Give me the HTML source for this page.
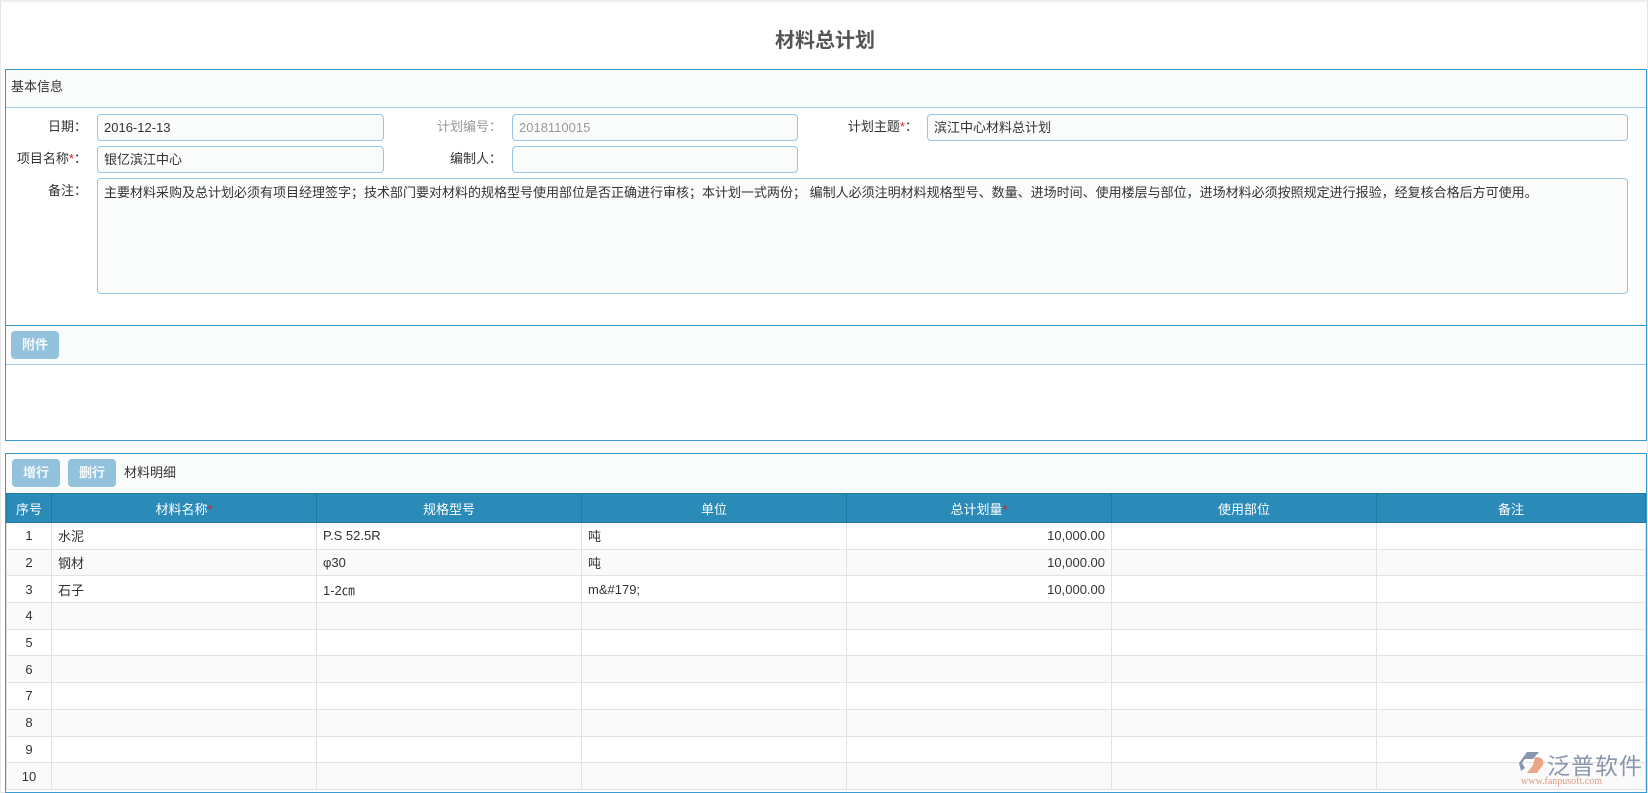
<!DOCTYPE html>
<html><head><meta charset="utf-8"><style>
*{box-sizing:border-box;margin:0;padding:0}
body{width:1648px;height:793px;background:#fff;font-family:"Liberation Sans","Noto Sans CJK SC",sans-serif;font-size:13px;color:#333;position:relative;overflow:hidden;border:1px solid #e6e6e6;border-top:2px solid #eee}
.abs{position:absolute}
.title{left:0;width:1648px;top:22px;text-align:center;font-size:20px;font-weight:bold;color:#555}
.panel{border:1px solid #3a9ad0;background:#fff}
.hd{background:#fafcfc;border-bottom:1px solid #a3c9e3}
.lbl{text-align:right;line-height:26px;height:26px}
.inp{border:1px solid #9cc3e3;border-radius:4px;background:#fafcfc;padding:0 6px;line-height:25px}
.btn{background:#93c3dc;border-radius:4px;font-weight:bold;text-align:center;color:#f4f8fb}
.red{color:#e02020}
table{border-collapse:collapse;table-layout:fixed;position:absolute}
td,th{border:1px solid #e2e2e2;height:26.7px;padding:0 6px;white-space:nowrap}
th{background:#2a8ab8;color:#fff;font-weight:normal;border-color:#2278a3;height:29px}
tr:nth-child(odd) td{background:#fafafa}
</style></head><body>
<div class="abs title">材料总计划</div>

<div class="abs panel" style="left:4px;top:67px;width:1642px;height:372px"></div>
<div class="abs hd" style="left:5px;top:68px;width:1640px;height:38px;line-height:34px;padding-left:5px">基本信息</div>

<div class="abs lbl" style="left:0;width:86px;top:112px">日期：</div>
<div class="abs inp" style="left:96px;top:112px;width:287px;height:27px">2016-12-13</div>
<div class="abs lbl" style="left:400px;width:101px;top:112px;color:#999">计划编号：</div>
<div class="abs inp" style="left:511px;top:112px;width:286px;height:27px;color:#999">2018110015</div>
<div class="abs lbl" style="left:800px;width:117px;top:112px">计划主题<span class="red">*</span>：</div>
<div class="abs inp" style="left:926px;top:112px;width:701px;height:27px">滨江中心材料总计划</div>

<div class="abs lbl" style="left:0;width:86px;top:144px">项目名称<span class="red">*</span>：</div>
<div class="abs inp" style="left:96px;top:144px;width:287px;height:27px">银亿滨江中心</div>
<div class="abs lbl" style="left:400px;width:101px;top:144px">编制人：</div>
<div class="abs inp" style="left:511px;top:144px;width:286px;height:27px"></div>

<div class="abs lbl" style="left:0;width:86px;top:176px">备注：</div>
<div class="abs inp" style="left:96px;top:176px;width:1531px;height:116px;padding-top:1px">主要材料采购及总计划必须有项目经理签字；技术部门要对材料的规格型号使用部位是否正确进行审核；本计划一式两份； 编制人必须注明材料规格型号、数量、进场时间、使用楼层与部位，进场材料必须按照规定进行报验，经复核合格后方可使用。</div>

<div class="abs hd" style="left:5px;top:323px;width:1640px;height:40px;border-top:1px solid #3a9ad0"></div>
<div class="abs btn" style="left:10px;top:329px;width:48px;height:28px;line-height:28px">附件</div>

<div class="abs panel" style="left:4px;top:451px;width:1642px;height:340px"></div>
<div class="abs" style="left:5px;top:452px;width:1640px;height:38px;background:#fafcfc"></div>
<div class="abs btn" style="left:11px;top:457px;width:48px;height:28px;line-height:28px">增行</div>
<div class="abs btn" style="left:67px;top:457px;width:48px;height:28px;line-height:28px">删行</div>
<div class="abs" style="left:123px;top:457px;line-height:28px">材料明细</div>

<table style="left:5px;top:491px;width:1640px">
<colgroup><col style="width:45px"><col style="width:265px"><col style="width:265px"><col style="width:265px"><col style="width:265px"><col style="width:265px"><col></colgroup>
<tr><th>序号</th><th>材料名称<span class="red">*</span></th><th>规格型号</th><th>单位</th><th>总计划量<span class="red">*</span></th><th>使用部位</th><th>备注</th></tr>
<tr><td style="text-align:center">1</td><td>水泥</td><td>P.S 52.5R</td><td>吨</td><td style="text-align:right">10,000.00</td><td></td><td></td></tr>
<tr><td style="text-align:center">2</td><td>钢材</td><td>φ30</td><td>吨</td><td style="text-align:right">10,000.00</td><td></td><td></td></tr>
<tr><td style="text-align:center">3</td><td>石子</td><td>1-2㎝</td><td>m&amp;#179;</td><td style="text-align:right">10,000.00</td><td></td><td></td></tr>
<tr><td style="text-align:center">4</td><td></td><td></td><td></td><td></td><td></td><td></td></tr>
<tr><td style="text-align:center">5</td><td></td><td></td><td></td><td></td><td></td><td></td></tr>
<tr><td style="text-align:center">6</td><td></td><td></td><td></td><td></td><td></td><td></td></tr>
<tr><td style="text-align:center">7</td><td></td><td></td><td></td><td></td><td></td><td></td></tr>
<tr><td style="text-align:center">8</td><td></td><td></td><td></td><td></td><td></td><td></td></tr>
<tr><td style="text-align:center">9</td><td></td><td></td><td></td><td></td><td></td><td></td></tr>
<tr><td style="text-align:center">10</td><td></td><td></td><td></td><td></td><td></td><td></td></tr>
</table>

<svg class="abs" style="left:1518px;top:749px" width="28" height="24" viewBox="0 0 28 24">
<path d="M8 1 L20 1 L14 8 L6 8 L3 12 L6 17 L2 20 L0 12 Z" fill="#8a96ad"/>
<path d="M16 6 Q26 6 24 14 L18 22 L8 22 L14 14 Z" fill="#e8a888"/>
</svg>
<div class="abs" style="left:1546px;top:745px;font-size:23px;color:#8a96ad;letter-spacing:1px">泛普软件</div>
<div class="abs" style="left:1520px;top:774px;font-size:10px;color:#e09a80;font-family:'Liberation Serif',serif">www.fanpusoft.com</div>
</body></html>
